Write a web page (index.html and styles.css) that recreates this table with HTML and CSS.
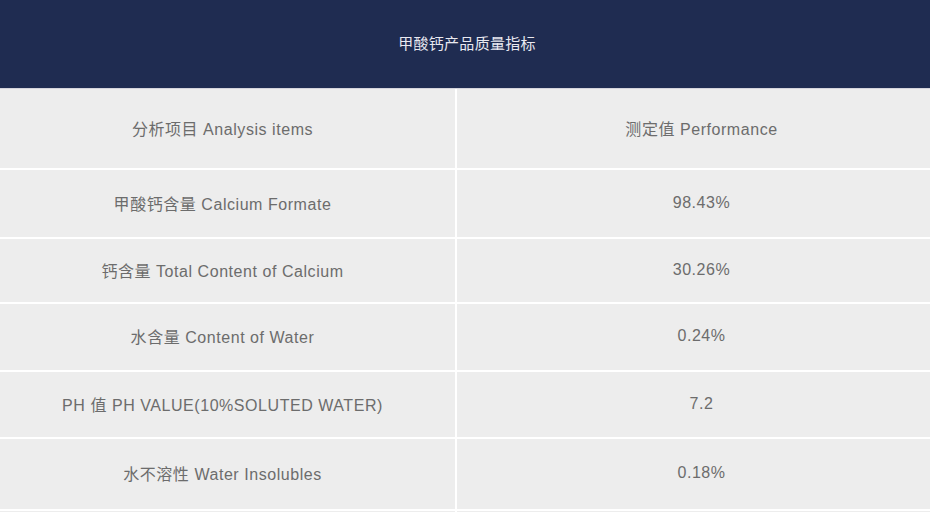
FILE: index.html
```html
<!DOCTYPE html>
<html lang="zh-CN">
<head>
<meta charset="utf-8">
<title>甲酸钙产品质量指标</title>
<link rel="stylesheet" href="styles.css">
</head>
<body>
<div class="page">
  <header class="title-bar">甲酸钙产品质量指标</header>
  <div class="spec-table">
    <div class="cell c1 r0">分析项目 Analysis items</div>
    <div class="cell c2 r0">测定值 Performance</div>
    <div class="cell c1 r1">甲酸钙含量 Calcium Formate</div>
    <div class="cell c2 r1">98.43%</div>
    <div class="cell c1 r2">钙含量 Total Content of Calcium</div>
    <div class="cell c2 r2">30.26%</div>
    <div class="cell c1 r3">水含量 Content of Water</div>
    <div class="cell c2 r3">0.24%</div>
    <div class="cell c1 r4">PH 值 PH VALUE(10%SOLUTED WATER)</div>
    <div class="cell c2 r4">7.2</div>
    <div class="cell c1 r5">水不溶性 Water Insolubles</div>
    <div class="cell c2 r5">0.18%</div>
    <div class="cell c1 r6"></div>
    <div class="cell c2 r6"></div>
  </div>
</div>
</body>
</html>
```

FILE: styles.css
```css
html, body {
  margin: 0;
  padding: 0;
  background: #ffffff;
}

.page {
  width: 930px;
  height: 512px;
  overflow: hidden;
  font-family: "Liberation Sans", "Noto Sans CJK SC", sans-serif;
}

.title-bar {
  height: 89px;
  box-sizing: border-box;
  padding: 0 0 4px 4px;
  background: #1f2c51;
  color: #e9e9f0;
  font-size: 15px;
  letter-spacing: 0.3px;
  display: flex;
  align-items: center;
  justify-content: center;
  border-bottom: 1px solid #d4d4dc;
}

.spec-table {
  display: grid;
  grid-template-columns: 455px 473px;
  grid-template-rows: 79px 67px 63px 66px 65px 70px 20px;
  column-gap: 2px;
  row-gap: 2px;
  background: #ffffff;
}

.cell {
  background: #ededed;
  color: #6c6c6c;
  font-size: 16px;
  letter-spacing: 0.55px;
  display: flex;
  align-items: center;
  justify-content: center;
  white-space: nowrap;
  padding-bottom: 2px;
  box-sizing: border-box;
}

.c1 {
  padding-right: 10px;
}

.c2 {
  padding-left: 16px;
}
```
